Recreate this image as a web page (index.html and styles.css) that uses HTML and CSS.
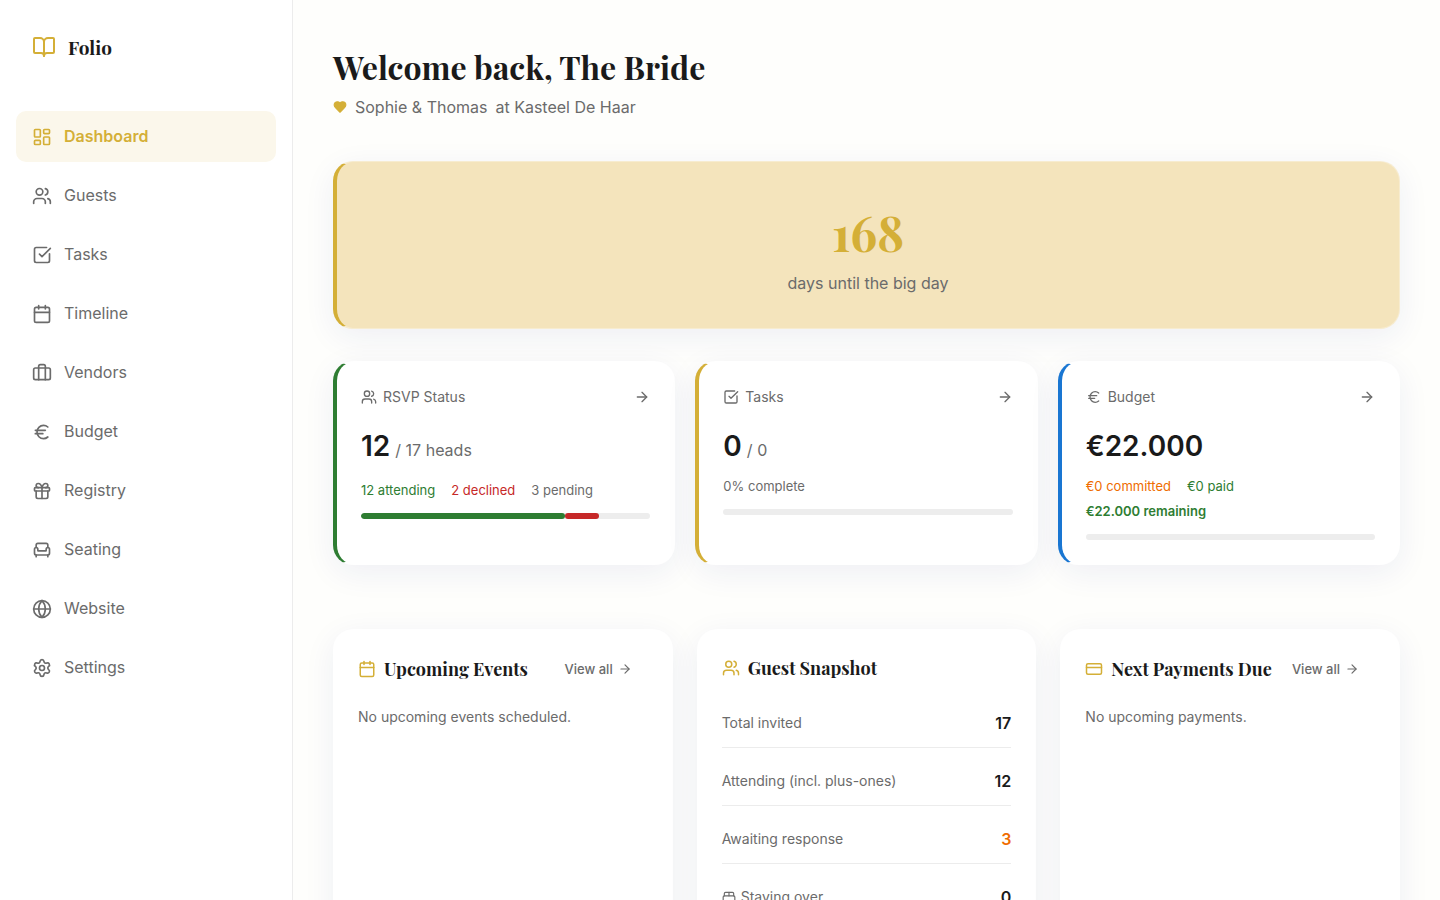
FILE: index.html
```html
<!DOCTYPE html>
<html lang="en">
<head>
    <meta charset="UTF-8">
    <meta name="viewport" content="width=device-width, initial-scale=1.0">
    <title>Folio - Dashboard</title>
    <link rel="stylesheet" href="styles.css">
</head>
<body>
    <!-- Icon definitions -->
    <svg class="icon-defs" aria-hidden="true">
        <symbol id="book" viewBox="0 0 24 24"><path d="M12 7v14"/><path d="M3 18a1 1 0 0 1-1-1V4a1 1 0 0 1 1-1h5a4 4 0 0 1 4 4 4 4 0 0 1 4-4h5a1 1 0 0 1 1 1v13a1 1 0 0 1-1 1h-6a3 3 0 0 0-3 3 3 3 0 0 0-3-3z"/></symbol>
        <symbol id="dashboard" viewBox="0 0 24 24"><rect width="7" height="9" x="3" y="3" rx="1"/><rect width="7" height="5" x="14" y="3" rx="1"/><rect width="7" height="9" x="14" y="12" rx="1"/><rect width="7" height="5" x="3" y="16" rx="1"/></symbol>
        <symbol id="users" viewBox="0 0 24 24"><path d="M16 21v-2a4 4 0 0 0-4-4H6a4 4 0 0 0-4 4v2"/><circle cx="9" cy="7" r="4"/><path d="M22 21v-2a4 4 0 0 0-3-3.87"/><path d="M16 3.13a4 4 0 0 1 0 7.75"/></symbol>
        <symbol id="check" viewBox="0 0 24 24"><path d="M21 10.5V19a2 2 0 0 1-2 2H5a2 2 0 0 1-2-2V5a2 2 0 0 1 2-2h12.5"/><path d="m9 11 3 3L22 4"/></symbol>
        <symbol id="calendar" viewBox="0 0 24 24"><path d="M8 2v4"/><path d="M16 2v4"/><rect width="18" height="18" x="3" y="4" rx="2"/><path d="M3 10h18"/></symbol>
        <symbol id="luggage" viewBox="0 0 24 24"><path d="M16 20V4a2 2 0 0 0-2-2h-4a2 2 0 0 0-2 2v16"/><rect width="20" height="14" x="2" y="6" rx="2"/></symbol>
        <symbol id="euro" viewBox="0 0 24 24"><path d="M4 10h12"/><path d="M4 14h9"/><path d="M19 6a7.7 7.7 0 0 0-5.2-2A7.9 7.9 0 0 0 6 12c0 4.4 3.5 8 7.8 8 2 0 3.8-.8 5.2-2"/></symbol>
        <symbol id="gift" viewBox="0 0 24 24"><rect x="3" y="8" width="18" height="4" rx="1"/><path d="M12 8v13"/><path d="M19 12v7a2 2 0 0 1-2 2H7a2 2 0 0 1-2-2v-7"/><path d="M7.5 8a2.5 2.5 0 0 1 0-5A4.8 8 0 0 1 12 8a4.8 8 0 0 1 4.5-5 2.5 2.5 0 0 1 0 5"/></symbol>
        <symbol id="armchair" viewBox="0 0 24 24"><path d="M19 9V6a2 2 0 0 0-2-2H7a2 2 0 0 0-2 2v3"/><path d="M3 16a2 2 0 0 0 2 2h14a2 2 0 0 0 2-2v-5a2 2 0 0 0-4 0v1.500a.5.5 0 0 1-.5.5h-9a.5.5 0 0 1-.5-.5V11a2 2 0 0 0-4 0z"/><path d="M5 18v2"/><path d="M19 18v2"/></symbol>
        <symbol id="globe" viewBox="0 0 24 24"><circle cx="12" cy="12" r="10"/><path d="M12 2a14.500 14.500 0 0 0 0 20 14.500 14.500 0 0 0 0-20"/><path d="M2 12h20"/></symbol>
        <symbol id="settings" viewBox="0 0 24 24"><path d="M9.671 4.136a2.340 2.340 0 0 1 4.659 0 2.340 2.340 0 0 0 3.319 1.915 2.340 2.340 0 0 1 2.330 4.033 2.340 2.340 0 0 0 0 3.831 2.340 2.340 0 0 1-2.330 4.033 2.340 2.340 0 0 0-3.319 1.915 2.340 2.340 0 0 1-4.659 0 2.340 2.340 0 0 0-3.320-1.915 2.340 2.340 0 0 1-2.330-4.033 2.340 2.340 0 0 0 0-3.831A2.340 2.340 0 0 1 6.350 6.051a2.340 2.340 0 0 0 3.319-1.915"/><circle cx="12" cy="12" r="3"/></symbol>
        <symbol id="heart" viewBox="0 0 24 24"><path d="M19 14c1.490-1.460 3-3.210 3-5.500A5.500 5.500 0 0 0 16.500 3c-1.760 0-3 .5-4.500 2-1.500-1.500-2.740-2-4.500-2A5.500 5.500 0 0 0 2 8.500c0 2.300 1.500 4.050 3 5.500l7 7Z"/></symbol>
        <symbol id="arrow" viewBox="0 0 24 24"><path d="M5 12h14"/><path d="m12 5 7 7-7 7"/></symbol>
        <symbol id="card" viewBox="0 0 24 24"><rect width="20" height="14" x="2" y="5" rx="2"/><path d="M2 10h20"/></symbol>
        <symbol id="bed" viewBox="0 0 24 24"><path d="M2 20v-8a2 2 0 0 1 2-2h16a2 2 0 0 1 2 2v8"/><path d="M4 10V6a2 2 0 0 1 2-2h12a2 2 0 0 1 2 2v4"/><path d="M12 4v6"/><path d="M2 18h20"/></symbol>
    </svg>

    <div class="layout">
        <aside class="sidebar">
            <a class="logo" href="#">
                <svg class="icon icon-lg"><use href="#book"/></svg>
                <span>Folio</span>
            </a>
            <nav class="nav">
                <a class="nav-item active" href="#" aria-current="page"><svg class="icon icon-md"><use href="#dashboard"/></svg>Dashboard</a>
                <a class="nav-item" href="#"><svg class="icon icon-md"><use href="#users"/></svg>Guests</a>
                <a class="nav-item" href="#"><svg class="icon icon-md"><use href="#check"/></svg>Tasks</a>
                <a class="nav-item" href="#"><svg class="icon icon-md"><use href="#calendar"/></svg>Timeline</a>
                <a class="nav-item" href="#"><svg class="icon icon-md"><use href="#luggage"/></svg>Vendors</a>
                <a class="nav-item" href="#"><svg class="icon icon-md"><use href="#euro"/></svg>Budget</a>
                <a class="nav-item" href="#"><svg class="icon icon-md"><use href="#gift"/></svg>Registry</a>
                <a class="nav-item" href="#"><svg class="icon icon-md"><use href="#armchair"/></svg>Seating</a>
                <a class="nav-item" href="#"><svg class="icon icon-md"><use href="#globe"/></svg>Website</a>
                <a class="nav-item" href="#"><svg class="icon icon-md"><use href="#settings"/></svg>Settings</a>
            </nav>
        </aside>

        <main class="main">
            <header class="page-header">
                <h1>Welcome back, The Bride</h1>
                <p class="subtitle">
                    <svg class="icon icon-xs heart"><use href="#heart"/></svg>
                    <span>Sophie &amp; Thomas</span>
                    <span>at Kasteel De Haar</span>
                </p>
            </header>

            <section class="card countdown">
                <div class="countdown-number">168</div>
                <div class="countdown-label">days until the big day</div>
            </section>

            <!-- Key numbers -->
            <section class="stats">
                <article class="card stat stat-green">
                    <div class="stat-header">
                        <svg class="icon icon-sm"><use href="#users"/></svg>
                        <h2>RSVP Status</h2>
                        <a href="#" aria-label="Open guests"><svg class="icon icon-sm"><use href="#arrow"/></svg></a>
                    </div>
                    <div class="stat-value">12 <small>/ 17 heads</small></div>
                    <div class="stat-details spaced">
                        <span class="green">12 attending</span>
                        <span class="red">2 declined</span>
                        <span>3 pending</span>
                    </div>
                    <div class="progress">
                        <div class="bar bar-green" style="width: 70.6%"></div>
                        <div class="bar bar-red" style="width: 11.8%"></div>
                    </div>
                </article>
                <article class="card stat stat-gold">
                    <div class="stat-header">
                        <svg class="icon icon-sm"><use href="#check"/></svg>
                        <h2>Tasks</h2>
                        <a href="#" aria-label="Open tasks"><svg class="icon icon-sm"><use href="#arrow"/></svg></a>
                    </div>
                    <div class="stat-value">0 <small>/ 0</small></div>
                    <div class="stat-details">
                        <span>0% complete</span>
                    </div>
                    <div class="progress"></div>
                </article>
                <article class="card stat stat-blue">
                    <div class="stat-header">
                        <svg class="icon icon-sm"><use href="#euro"/></svg>
                        <h2>Budget</h2>
                        <a href="#" aria-label="Open budget"><svg class="icon icon-sm"><use href="#arrow"/></svg></a>
                    </div>
                    <div class="stat-value">€22.000</div>
                    <div class="stat-details">
                        <span class="orange">€0 committed</span>
                        <span class="green">€0 paid</span>
                        <strong class="green">€22.000 remaining</strong>
                    </div>
                    <div class="progress"></div>
                </article>
            </section>

            <section class="panels">
                <article class="card panel">
                    <div class="panel-header">
                        <svg class="icon icon-title"><use href="#calendar"/></svg>
                        <h2>Upcoming Events</h2>
                        <a class="view-all" href="#">View all <svg class="icon icon-xs"><use href="#arrow"/></svg></a>
                    </div>
                    <p class="empty">No upcoming events scheduled.</p>
                </article>
                <article class="card panel">
                    <div class="panel-header">
                        <svg class="icon icon-title"><use href="#users"/></svg>
                        <h2>Guest Snapshot</h2>
                    </div>
                    <dl class="snapshot">
                        <div class="snapshot-row"><dt>Total invited</dt><dd>17</dd></div>
                        <div class="snapshot-row"><dt>Attending (incl. plus-ones)</dt><dd>12</dd></div>
                        <div class="snapshot-row"><dt>Awaiting response</dt><dd class="orange">3</dd></div>
                        <div class="snapshot-row"><dt><svg class="icon icon-xs"><use href="#bed"/></svg> Staying over</dt><dd>0</dd></div>
                    </dl>
                </article>
                <article class="card panel">
                    <div class="panel-header">
                        <svg class="icon icon-title"><use href="#card"/></svg>
                        <h2>Next Payments Due</h2>
                        <a class="view-all" href="#">View all <svg class="icon icon-xs"><use href="#arrow"/></svg></a>
                    </div>
                    <p class="empty">No upcoming payments.</p>
                </article>
            </section>
        </main>
    </div>
</body>
</html>
```
FILE: styles.css
```css
:root {
    --gold: #d4af37;
    --gold-light: #f4e4bc;
    --text: #1a1a1a;
    --muted: #6b6b6b;
    --green: #2e7d32;
    --red: #c62828;
    --orange: #ef6c00;
    --blue: #1976d2;
    --line: #ececec;
    --serif: "Playfair Display", "Liberation Serif", serif;
}
* {
    box-sizing: border-box;
    margin: 0;
    padding: 0;
}
body {
    font-family: Inter, sans-serif;
    font-size: 16px;
    line-height: 26px;
    color: var(--text);
    background: #fefefc;
}
a {
    color: inherit;
    text-decoration: none;
}
.icon-defs {
    display: none;
}
.icon {
    flex-shrink: 0;
    fill: none;
    stroke: currentColor;
    stroke-width: 2;
    stroke-linecap: round;
    stroke-linejoin: round;
}
.icon-xs {
    width: 14px;
    height: 14px;
}
.icon-sm {
    width: 16px;
    height: 16px;
}
.icon-title {
    width: 18px;
    height: 18px;
    color: var(--gold);
}
.icon-md {
    width: 20px;
    height: 20px;
}
.icon-lg {
    width: 24px;
    height: 24px;
}
.green {
    color: var(--green);
}
.red {
    color: var(--red);
}
.orange {
    color: var(--orange);
}
.layout {
    display: flex;
    min-height: 100vh;
}

/* Sidebar */
.sidebar {
    width: 293px;
    flex-shrink: 0;
    padding: 32px 16px;
    background: #fff;
    border-right: 1px solid var(--line);
}
.logo {
    display: flex;
    align-items: center;
    gap: 12px;
    padding: 0 16px;
    margin-bottom: 49px;
    font-family: var(--serif);
    font-size: 19px;
    font-weight: 700;
    line-height: 30px;
}
.logo .icon {
    color: var(--gold);
}
.nav {
    display: flex;
    flex-direction: column;
    gap: 8px;
}
.nav-item {
    display: flex;
    align-items: center;
    gap: 12px;
    padding: 12px 16px;
    border-radius: 10px;
    line-height: 27px;
    color: var(--muted);
}
.nav-item.active {
    color: var(--gold);
    background: #fbf7eb;
    font-weight: 600;
}

/* Main column */
.main {
    flex: 1;
    min-width: 0;
    padding: 40px;
}
.page-header {
    margin-bottom: 40px;
}
.page-header h1 {
    font-family: var(--serif);
    font-size: 32px;
    font-weight: 700;
    line-height: 53px;
}
.subtitle {
    display: flex;
    align-items: center;
    gap: 8px;
    line-height: 28px;
    color: var(--muted);
}
.heart {
    fill: var(--gold);
    color: var(--gold);
}
.card {
    background: #fff;
    border: 1px solid rgba(255, 255, 255, 0.3);
    border-radius: 20px;
    box-shadow: 0 8px 32px rgba(31, 38, 135, 0.07);
}
.countdown {
    padding: 32px;
    margin-bottom: 32px;
    border-left: 4px solid var(--gold);
    background: var(--gold-light);
    text-align: center;
}
.countdown-number {
    font-family: var(--serif);
    font-size: 48px;
    font-weight: 700;
    line-height: 76px;
    color: var(--gold);
}
.countdown-label {
    color: var(--muted);
}
.stats {
    display: grid;
    grid-template-columns: repeat(3, 1fr);
    gap: 20px;
    margin-bottom: 64px;
}
.stat {
    padding: 24px;
    border-left-width: 4px;
}
.stat-green {
    border-left-color: var(--green);
}
.stat-gold {
    border-left-color: var(--gold);
}
.stat-blue {
    border-left-color: var(--blue);
}
.stat-header {
    display: flex;
    align-items: center;
    gap: 6px;
    line-height: 22px;
    margin-bottom: 16px;
    color: var(--muted);
}
.stat-header h2 {
    flex: 1;
    font-size: 14px;
    font-weight: 400;
}
.stat-header a {
    display: flex;
}
.stat-value {
    font-size: 28px;
    font-weight: 600;
    line-height: 44px;
    margin-bottom: 8px;
}
.stat-value small {
    margin-left: -2px;
    font-size: 16px;
    font-weight: 400;
    line-height: 16px;
    color: var(--muted);
}
.stat-details {
    display: flex;
    flex-wrap: wrap;
    gap: 5px 16px;
    font-size: 13px;
    line-height: 20px;
    margin-bottom: 13px;
    color: var(--muted);
}
.stat-details.spaced {
    margin-top: 12px;
}
.stat-details strong {
    width: 100%;
    font-weight: 600;
}
.progress {
    display: flex;
    height: 6px;
    border-radius: 3px;
    background: #ededed;
    overflow: hidden;
}
.bar {
    border-radius: 3px;
}
.bar-green {
    background: var(--green);
}
.bar-red {
    background: var(--red);
}

/* Detail panels */
.panels {
    display: grid;
    grid-template-columns: repeat(3, minmax(0, 1fr));
    gap: 24px;
}
.panel {
    padding: 24px;
}
.panel-header {
    display: flex;
    align-items: center;
    gap: 8px;
    margin-bottom: 17px;
}
.panel-header h2 {
    flex: 1;
    font-family: var(--serif);
    font-size: 18px;
    font-weight: 700;
    line-height: 28px;
    white-space: nowrap;
}
.view-all {
    display: flex;
    align-items: center;
    gap: 5px;
    padding: 0 16px 0 8px;
    font-size: 13px;
    font-weight: 500;
    line-height: 30px;
    white-space: nowrap;
    color: var(--muted);
}
.empty {
    padding-top: 3px;
    font-size: 14px;
    color: var(--muted);
}
.snapshot {
    display: flex;
    flex-direction: column;
    gap: 9px;
}
.snapshot-row {
    display: flex;
    align-items: center;
    justify-content: space-between;
    padding: 12px 0;
    border-bottom: 1px solid var(--line);
    line-height: 24px;
}
.snapshot-row dt {
    display: flex;
    align-items: center;
    gap: 5px;
    font-size: 14px;
    color: var(--muted);
}
.snapshot-row dd {
    font-weight: 600;
}
```
